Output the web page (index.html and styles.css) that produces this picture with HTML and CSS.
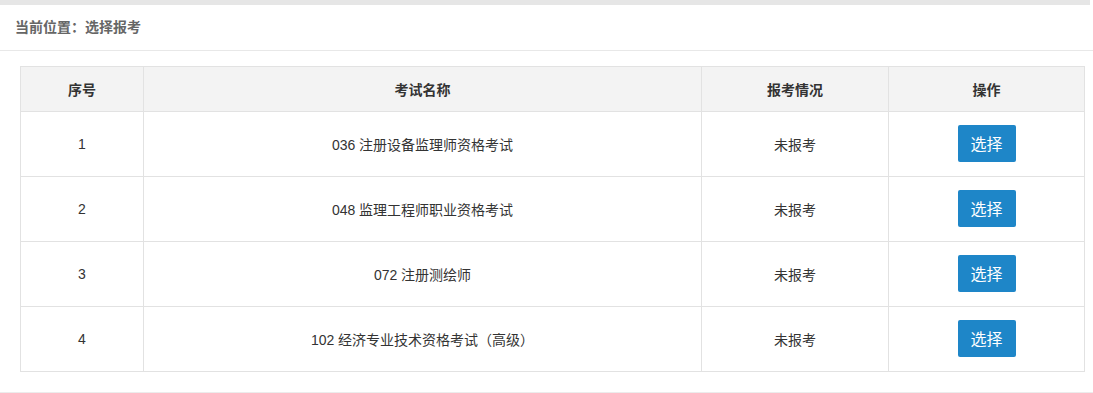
FILE: index.html
```html
<!DOCTYPE html>
<html lang="zh-CN">
<head>
<meta charset="utf-8">
<title>选择报考</title>
<link rel="stylesheet" href="styles.css">
</head>
<body>
<div class="topbar"></div>
<div class="panel">
  <div class="panel-head">当前位置：选择报考</div>
  <div class="panel-body">
    <table class="grid">
      <colgroup>
        <col class="c1"><col class="c2"><col class="c3"><col class="c4">
      </colgroup>
      <thead>
        <tr><th>序号</th><th>考试名称</th><th>报考情况</th><th>操作</th></tr>
      </thead>
      <tbody>
        <tr><td>1</td><td>036 注册设备监理师资格考试</td><td>未报考</td><td><button class="btn">选择</button></td></tr>
        <tr><td>2</td><td>048 监理工程师职业资格考试</td><td>未报考</td><td><button class="btn">选择</button></td></tr>
        <tr><td>3</td><td>072 注册测绘师</td><td>未报考</td><td><button class="btn">选择</button></td></tr>
        <tr><td>4</td><td>102 经济专业技术资格考试（高级）</td><td>未报考</td><td><button class="btn">选择</button></td></tr>
      </tbody>
    </table>
  </div>
</div>
</body>
</html>
```
FILE: styles.css
```css
html, body {
  margin: 0;
  padding: 0;
  background: #fff;
  font-family: "Liberation Sans", "Noto Sans CJK SC", sans-serif;
  font-size: 14px;
  color: #333;
}
.topbar {
  height: 5px;
  background: #e6e6e6;
  margin-right: 3px;
}
.panel {
  border-bottom: 1px solid #ececec;
}
.panel-head {
  height: 45px;
  line-height: 45px;
  padding-left: 15px;
  font-weight: bold;
  color: #666;
  border-bottom: 1px solid #e8e8e8;
}
.panel-body {
  padding: 15px 8px 20px 20px;
}
.grid {
  width: 100%;
  border-collapse: collapse;
  table-layout: fixed;
}
.c1 { width: 123px; }
.c2 { width: 558px; }
.c3 { width: 187px; }
.c4 { width: auto; }
.grid th, .grid td {
  border: 1px solid #e2e2e2;
  text-align: center;
  padding: 0;
}
.grid th {
  height: 44px;
  background: #f3f3f3;
  font-weight: bold;
  color: #333;
}
.grid td {
  height: 64px;
  color: #333;
}
.btn {
  width: 58px;
  height: 37px;
  border: none;
  border-radius: 2px;
  background: #1e86c8;
  color: #fff;
  font-family: "Liberation Sans", "Noto Sans CJK SC", sans-serif;
  font-size: 16px;
  padding: 0;
  margin: 0 0 2px 0;
  vertical-align: middle;
}
```
